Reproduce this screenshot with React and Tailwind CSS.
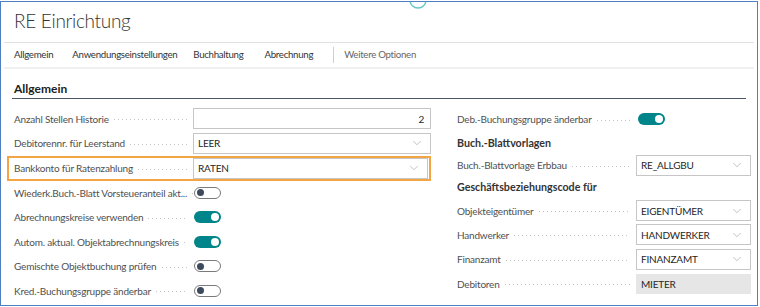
import { ChevronDown } from "lucide-react";

const LEFT_ROWS = [
  { label: "Anzahl Stellen Historie", type: "number", value: "2" },
  { label: "Debitorennr. für Leerstand", type: "select", value: "LEER" },
  { label: "Bankkonto für Ratenzahlung", type: "select", value: "RATEN", focus: true },
  { label: "Wiederk.Buch.-Blatt Vorsteueranteil akt...", type: "toggle", value: false },
  { label: "Abrechnungskreise verwenden", type: "toggle", value: true },
  { label: "Autom. aktual. Objektabrechnungskreis", type: "toggle", value: true },
  { label: "Gemischte Objektbuchung prüfen", type: "toggle", value: false },
  { label: "Kred.-Buchungsgruppe änderbar", type: "toggle", value: false }
];

const CODES = [
  { label: "Objekteigentümer", type: "select", value: "EIGENTÜMER" },
  { label: "Handwerker", type: "select", value: "HANDWERKER" },
  { label: "Finanzamt", type: "select", value: "FINANZAMT" },
  { label: "Debitoren", type: "readonly", value: "MIETER" }
];

function Leader(){
  return (
    <div className="flex-1 min-w-[3px] h-px ml-[5px] mr-[6px] mt-[2px] bg-[linear-gradient(to_right,#c4c4c4_1px,transparent_1px)] bg-[length:4px_1px] bg-repeat-x" />
  );
}

function Toggle({ on }){
  return on ? (
    <div className="w-[27px] h-[12px] rounded-full bg-[#00858a] flex items-center justify-end pr-[2px]">
      <div className="w-[8px] h-[8px] rounded-full bg-white" />
    </div>
  ) : (
    <div className="w-[27px] h-[12px] rounded-full bg-white border border-[#7a7a7a] flex items-center pl-[2px]">
      <div className="w-[7px] h-[7px] rounded-full bg-[#3d4a5c]" />
    </div>
  );
}

function Field({ type, value }){
  if(type==="toggle") return <div className="flex-1 flex items-center pl-px"><Toggle on={value}/></div>;
  if(type==="readonly"){
    return (
      <div className="flex-1 h-[20px] bg-[#e6e6e6] flex items-center pl-[5px] text-[#262626]">{value}</div>
    );
  }
  return (
    <div className="flex-1 h-[21px] bg-white border border-[#c6c6c6] flex items-center pl-[4px] pr-[6px] text-[#262626]">
      <span className={type==="number" ? "flex-1 text-right" : "flex-1"}>{value}</span>
      {type==="select" && <ChevronDown size={14} strokeWidth={1} className="text-[#9a9a9a]" />}
    </div>
  );
}

function Row({ label, type, value, labelWidth }){
  return (
    <div className="flex items-center h-full">
      <div className={`${labelWidth} flex items-center text-[#505050] shrink-0`}>
        <span className="whitespace-nowrap">{label}</span>
        <Leader />
      </div>
      <Field type={type} value={value} />
    </div>
  );
}

export default function App(){
  return (
    <div className="w-[760px] h-[307px] bg-white font-['Lato','Open_Sans',sans-serif] text-[10px] tracking-[-0.2px] leading-none">
      <div className="relative mt-px w-[758px] h-[305px] border border-[#4f80c2] overflow-hidden">

        {/* spinner edge */}
        <svg className="absolute left-[407px] -top-[12px]" width="20" height="20" viewBox="0 0 20 20">
          <circle cx="10" cy="10" r="8" fill="none" stroke="#6cc8c8" strokeWidth="1.5" />
        </svg>

        {/* HEADER */}
        <div className="h-[40px] pl-[13px] pt-[9px]">
          <h1 className="text-[19px] font-light tracking-[-0.3px] text-[#333] leading-none">RE Einrichtung</h1>
        </div>
        <div className="mx-[3px] border-t border-[#e2e2e2]" />

        <div className="h-[24px] flex items-center pl-[13px] text-[9.7px] tracking-[-0.3px] text-[#333]">
          <span>Allgemein</span>
          <span className="ml-[19px]">Anwendungseinstellungen</span>
          <span className="ml-[16px]">Buchhaltung</span>
          <span className="ml-[21px]">Abrechnung</span>
          <span className="ml-[20px] w-px h-[16px] bg-[#cfcfcf]" />
          <span className="ml-[10px] text-[#666]">Weitere Optionen</span>
        </div>
        <div className="mx-[3px] border-t-2 border-[#f0f0f0]" />

        {/* SECTION */}
        <div className="mx-[11px] mt-[14px] pl-[2px] pb-[3px] border-b-[1.5px] border-[#4a5567]">
          <h2 className="text-[12px] font-bold tracking-normal text-[#222]">Allgemein</h2>
        </div>

        <div className="flex pl-[13px] pt-[7.5px]">
          {/* LEFT */}
          <div className="w-[417px] shrink-0 flex flex-col">
            {LEFT_ROWS.map(r=>(
              r.focus ? (
                <div key={r.label} className="h-[25px] -ml-[7px] border-2 border-[#f3a443] pl-[5px] pr-px">
                  <Row {...r} labelWidth="w-[179px]" />
                </div>
              ) : (
                <div key={r.label} className="h-[24.5px]">
                  <Row {...r} labelWidth="w-[179px]" />
                </div>
              )
            ))}
          </div>

          {/* RIGHT */}
          <div className="ml-[26px] w-[294px] shrink-0 flex flex-col">
            <div className="h-[25px]">
              <Row label="Deb.-Buchungsgruppe änderbar" type="toggle" value={true} labelWidth="w-[180px]" />
            </div>
            <div className="h-[23px] flex items-center text-[10.7px] font-bold tracking-normal text-[#333]">Buch.-Blattvorlagen</div>
            <div className="h-[21px]">
              <Row label="Buch.-Blattvorlage Erbbau" type="select" value="RE_ALLGBU" labelWidth="w-[179px]" />
            </div>
            <div className="h-[23px] flex items-center text-[10.7px] font-bold tracking-normal text-[#333]">Geschäftsbeziehungscode für</div>
            {CODES.map(r=>(
              <div key={r.label} className="h-[24.3px]">
                <Row {...r} labelWidth="w-[179px]" />
              </div>
            ))}
          </div>
        </div>

      </div>
    </div>
  );
}
